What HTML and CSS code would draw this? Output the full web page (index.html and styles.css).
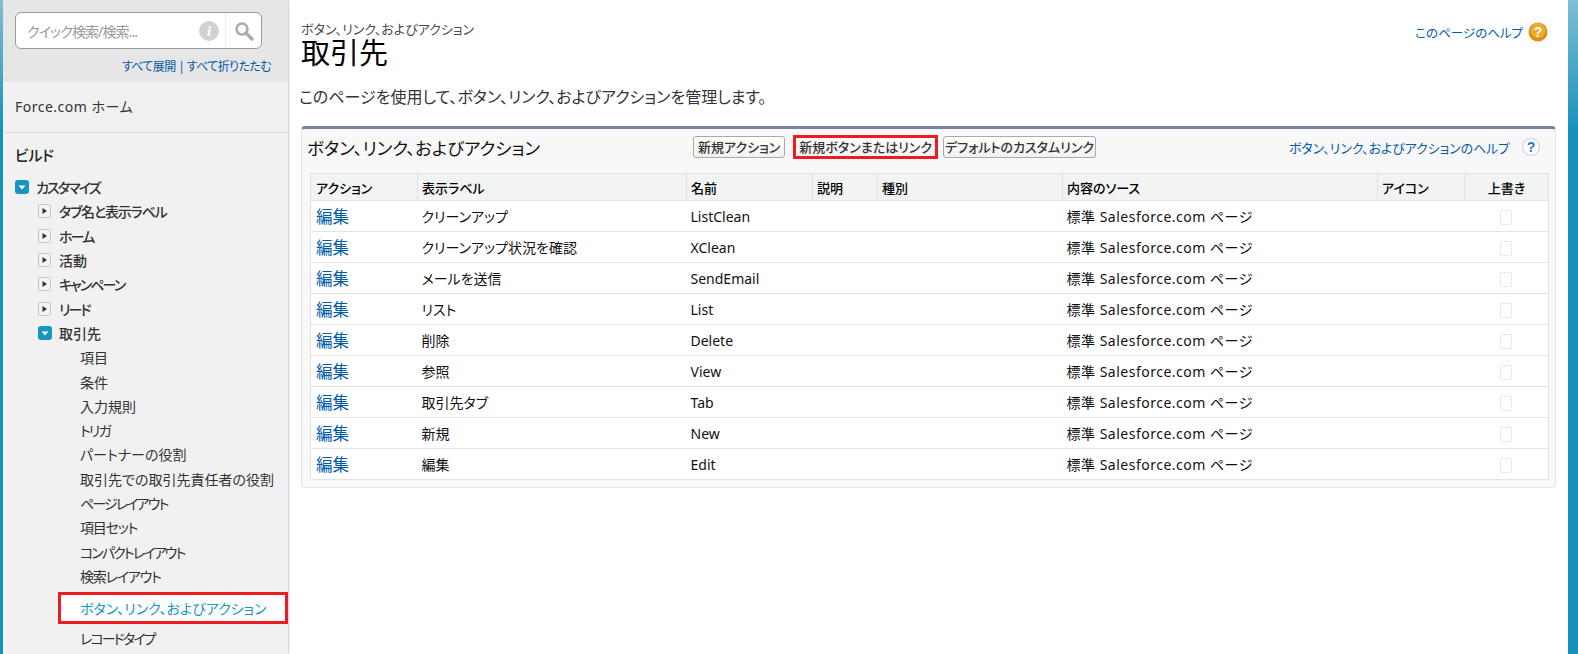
FILE: index.html
```html
<!DOCTYPE html>
<html lang="ja">
<head>
    <meta charset="UTF-8">
    <title>取引先 ボタン、リンク、およびアクション</title>
    <link rel="stylesheet" href="styles.css">
</head>
<body>
    <svg class="defs" width="0" height="0">
        <symbol id="open" viewBox="0 0 14 14">
            <rect width="14" height="14" rx="3" fill="#1797c0"/>
            <path d="M3.5 5.5h7L7 9.5z" fill="#fff"/>
        </symbol>
        <symbol id="closed" viewBox="0 0 14 14">
            <rect x=".5" y=".5" width="12" height="13" rx="2" fill="#f2f2f2" stroke="#c4c4c4"/>
            <path d="M4.5 4l4.5 3-4.5 3z" fill="#333"/>
        </symbol>
    </svg>

    <aside class="sidebar">
        <div class="search-zone">
            <div class="search-box">
                <span class="search-hint">クイック検索/検索...</span>
                <svg class="info-icon" width="20" height="20" viewBox="0 0 20 20">
                    <circle cx="10" cy="10" r="10" fill="#d0d3d5"/>
                    <text x="10" y="15" class="info-i">i</text>
                </svg>
                <span class="search-btn">
                    <svg width="20" height="20" viewBox="0 0 20 20">
                        <circle cx="8" cy="8" r="5.5" fill="none" stroke="#a9adaf" stroke-width="2.6"/>
                        <path d="M12 12l6 6" stroke="#a9adaf" stroke-width="3.4" stroke-linecap="round"/>
                    </svg>
                </span>
            </div>
            <div class="expand-links"><a href="#">すべて展開</a> | <a href="#">すべて折りたたむ</a></div>
        </div>
        <div class="home-link">Force.com ホーム</div>
        <div class="nav-title">ビルド</div>
        <ul class="nav">
            <li class="nav-top tight"><svg class="tw"><use href="#open"/></svg>カスタマイズ</li>
            <li class="nav-sec tight-some"><svg class="tw"><use href="#closed"/></svg>タブ名と表示ラベル</li>
            <li class="nav-sec tight"><svg class="tw"><use href="#closed"/></svg>ホーム</li>
            <li class="nav-sec"><svg class="tw"><use href="#closed"/></svg>活動</li>
            <li class="nav-sec tight"><svg class="tw"><use href="#closed"/></svg>キャンペーン</li>
            <li class="nav-sec tight"><svg class="tw"><use href="#closed"/></svg>リード</li>
            <li class="nav-sec"><svg class="tw"><use href="#open"/></svg>取引先</li>
            <li class="nav-sub">項目</li>
            <li class="nav-sub">条件</li>
            <li class="nav-sub">入力規則</li>
            <li class="nav-sub tight">トリガ</li>
            <li class="nav-sub">パートナーの役割</li>
            <li class="nav-sub">取引先での取引先責任者の役割</li>
            <li class="nav-sub tight">ページレイアウト</li>
            <li class="nav-sub tight-some">項目セット</li>
            <li class="nav-sub tight">コンパクトレイアウト</li>
            <li class="nav-sub tight-some">検索レイアウト</li>
            <li class="nav-active">ボタン、リンク、およびアクション</li>
            <li class="nav-sub tight">レコードタイプ</li>
        </ul>
    </aside>

    <main class="content">
        <div class="page-head">
            <div>
                <div class="page-sub">ボタン、リンク、およびアクション</div>
                <h1 class="page-title">取引先</h1>
            </div>
            <a class="page-help" href="#">このページのヘルプ
                <svg width="20" height="20" viewBox="0 0 20 20">
                    <circle cx="10" cy="10" r="9.5" fill="#e08d16"/>
                    <circle cx="10" cy="8.5" r="7.5" fill="#f0a92e"/>
                    <text x="10" y="15" class="help-q">?</text>
                </svg>
            </a>
        </div>
        <p class="page-desc">このページを使用して、ボタン、リンク、およびアクションを管理します。</p>

        <section class="panel">
            <div class="panel-head">
                <h2 class="panel-title">ボタン、リンク、およびアクション</h2>
                <div class="panel-btns">
                    <button class="btn">新規アクション</button>
                    <button class="btn btn-marked">新規ボタンまたはリンク</button>
                    <button class="btn btn-wide">デフォルトのカスタムリンク</button>
                </div>
                <a class="panel-help" href="#">ボタン、リンク、およびアクションのヘルプ
                    <svg width="20" height="20" viewBox="0 0 20 20">
                        <circle cx="10" cy="10" r="9.5" fill="#dfe3e8"/>
                        <circle cx="10" cy="10" r="7.5" fill="#fff"/>
                        <text x="10" y="15" class="help-q help-blue">?</text>
                    </svg>
                </a>
            </div>
            <table class="list">
                <colgroup>
                    <col class="c1"><col class="c2"><col class="c3"><col class="c4">
                    <col class="c5"><col class="c6"><col class="c7"><col class="c8">
                </colgroup>
                <thead>
                    <tr>
                        <th>アクション</th><th>表示ラベル</th><th>名前</th><th>説明</th>
                        <th>種別</th><th>内容のソース</th><th>アイコン</th><th class="center">上書き</th>
                    </tr>
                </thead>
                <tbody>
                    <tr><td><a href="#">編集</a></td><td>クリーンアップ</td><td>ListClean</td><td></td><td></td><td class="src">標準 Salesforce.com ページ</td><td></td><td class="center"><span class="check"></span></td></tr>
                    <tr><td><a href="#">編集</a></td><td>クリーンアップ状況を確認</td><td>XClean</td><td></td><td></td><td class="src">標準 Salesforce.com ページ</td><td></td><td class="center"><span class="check"></span></td></tr>
                    <tr><td><a href="#">編集</a></td><td>メールを送信</td><td>SendEmail</td><td></td><td></td><td class="src">標準 Salesforce.com ページ</td><td></td><td class="center"><span class="check"></span></td></tr>
                    <tr><td><a href="#">編集</a></td><td>リスト</td><td>List</td><td></td><td></td><td class="src">標準 Salesforce.com ページ</td><td></td><td class="center"><span class="check"></span></td></tr>
                    <tr><td><a href="#">編集</a></td><td>削除</td><td>Delete</td><td></td><td></td><td class="src">標準 Salesforce.com ページ</td><td></td><td class="center"><span class="check"></span></td></tr>
                    <tr><td><a href="#">編集</a></td><td>参照</td><td>View</td><td></td><td></td><td class="src">標準 Salesforce.com ページ</td><td></td><td class="center"><span class="check"></span></td></tr>
                    <tr><td><a href="#">編集</a></td><td>取引先タブ</td><td>Tab</td><td></td><td></td><td class="src">標準 Salesforce.com ページ</td><td></td><td class="center"><span class="check"></span></td></tr>
                    <tr><td><a href="#">編集</a></td><td>新規</td><td>New</td><td></td><td></td><td class="src">標準 Salesforce.com ページ</td><td></td><td class="center"><span class="check"></span></td></tr>
                    <tr><td><a href="#">編集</a></td><td>編集</td><td>Edit</td><td></td><td></td><td class="src">標準 Salesforce.com ページ</td><td></td><td class="center"><span class="check"></span></td></tr>
                </tbody>
            </table>
        </section>
    </main>
</body>
</html>
```

FILE: styles.css
```css
* {
    box-sizing: border-box;
}

html, body {
    height: 100%;
}

body {
    margin: 0;
    display: flex;
    overflow: hidden;
    background: #fff;
    color: #222;
    font-family: "Noto Sans", "Noto Sans CJK JP", sans-serif;
    font-feature-settings: "palt";
    font-size: 14px;
    border-left: 3px solid #1594bb;
    border-right: 10px solid #1594bb;
    border-image: linear-gradient(#82bdd3, #1594bb 130px) 1;
}

a {
    color: #015ba7;
    text-decoration: none;
}

.defs {
    position: absolute;
}

/* sidebar */
.sidebar {
    width: 285px;
    flex-shrink: 0;
    background: #f1f1f1;
    box-shadow: 1px 0 2px #ccc;
}

.search-zone {
    height: 82px;
    padding: 12px 0 0 12px;
    background: #e6e6e6;
}

.search-box {
    display: flex;
    align-items: center;
    width: 247px;
    height: 37px;
    padding-left: 11px;
    background: #fff;
    border: 1px solid #9a9a9a;
    border-radius: 6px;
}

.search-hint {
    flex: 1;
    color: #999;
    font-size: 14px;
    letter-spacing: -.9px;
    white-space: nowrap;
}

.info-icon {
    margin-right: 6px;
}

.info-i {
    fill: #fff;
    font: italic bold 15px "Liberation Serif", serif;
    text-anchor: middle;
}

.search-btn {
    display: flex;
    align-items: center;
    justify-content: center;
    width: 36px;
    height: 100%;
    border-left: 1px dotted #ddd;
}

.expand-links {
    width: 256px;
    margin-top: 10px;
    color: #015ba7;
    font-size: 12px;
    letter-spacing: -.6px;
    line-height: 16px;
    text-align: right;
}

.home-link {
    height: 51px;
    padding: 14px 0 0 12px;
    border-bottom: 1px solid #dcdcdc;
    color: #333;
    font-size: 14px;
    letter-spacing: .5px;
    line-height: 22px;
}

.nav-title {
    height: 42px;
    padding: 11px 0 0 12px;
    color: #222;
    font-size: 15px;
    font-weight: 500;
    letter-spacing: -.4px;
    line-height: 22px;
}

.nav {
    margin: 0;
    padding: 0;
    list-style: none;
}

.nav li {
    display: flex;
    align-items: center;
    height: 24.3px;
    white-space: nowrap;
}

.tw {
    width: 14px;
    height: 14px;
    margin-right: 7px;
    flex-shrink: 0;
}

.nav-top {
    padding-left: 12px;
    font-weight: 500;
    color: #333;
}

.nav-sec {
    padding-left: 35px;
    font-weight: 500;
    color: #333;
}

.nav-sub {
    padding-left: 77px;
    color: #333;
}

.tight {
    letter-spacing: -1.9px;
}

.tight-some {
    letter-spacing: -1.2px;
}

.nav .nav-active {
    height: 32px;
    margin: 4px 0 2px 55px;
    padding-left: 19px;
    background: #fff;
    border: 3px solid #ed1c24;
    color: #1797c0;
}

/* main area */
.content {
    flex: 1;
    min-width: 0;
    padding: 22px 12px 0 13px;
}

.page-head {
    display: flex;
    justify-content: space-between;
    height: 46px;
}

.page-sub {
    color: #4a4a4a;
    font-size: 13px;
    line-height: 15px;
}

.page-title {
    margin: 0;
    color: #000;
    font-size: 29px;
    font-weight: 400;
    line-height: 31px;
}

.page-help {
    display: flex;
    align-items: center;
    gap: 5px;
    height: 20px;
    margin-right: 8px;
    font-size: 12.5px;
}

.help-q {
    fill: #fff;
    font: bold 14px "Liberation Sans", sans-serif;
    text-anchor: middle;
}

.help-blue {
    fill: #2a72c8;
}

.page-desc {
    height: 58px;
    margin: 0 0 0 -2px;
    padding-top: 18px;
    color: #333;
    font-size: 16px;
    line-height: 22px;
}

.panel {
    height: 362px;
    padding: 0 7px 0 8px;
    background: #f8f8f8;
    border: 1px solid #e3e5e7;
    border-top: 3px solid #7a83a0;
    border-radius: 4px;
}

.panel-head {
    display: flex;
    align-items: center;
    height: 44px;
    padding-bottom: 8px;
}

.panel-title {
    width: 386px;
    margin: 0 0 0 -3px;
    color: #111;
    font-size: 17.5px;
    font-weight: 400;
    white-space: nowrap;
}

.panel-btns {
    display: flex;
    align-items: center;
    gap: 5px;
}

.btn {
    height: 22px;
    padding: 0 4px;
    background: linear-gradient(#fff, #f1f1f1);
    border: 1px solid #aaa;
    border-radius: 3px;
    color: #333;
    font-family: inherit;
    font-feature-settings: inherit;
    font-size: 13px;
    font-weight: 500;
    line-height: 18px;
    white-space: nowrap;
}

.btn-marked {
    height: 24px;
    margin-left: 3px;
    padding: 0 3px;
    border: 3px solid #ed1c24;
    border-radius: 0;
}

.btn-wide {
    padding: 0 1px;
}

.panel-help {
    display: flex;
    align-items: center;
    gap: 11px;
    margin: 0 7px 0 auto;
    font-size: 12.9px;
}

.list {
    width: 1238px;
    border-collapse: collapse;
    table-layout: fixed;
    background: #fff;
    border: 1px solid #e0e3e5;
}

.c1 { width: 107px; }
.c2 { width: 269px; }
.c3 { width: 126px; }
.c4 { width: 65px; }
.c5 { width: 185px; }
.c6 { width: 315px; }
.c7 { width: 87px; }
.c8 { width: 84px; }

.list th {
    height: 27px;
    padding: 0 4px;
    background: #f2f3f3;
    border: 1px solid #e0e3e5;
    color: #000;
    font-size: 13px;
    font-weight: 500;
    text-align: left;
}

.list td {
    height: 31px;
    padding: 0 4px;
    border-bottom: 1px solid #e3e3e3;
    color: #111;
    font-size: 14px;
    white-space: nowrap;
}

.list th:first-child,
.list td:first-child {
    padding-left: 5px;
}

.list td a {
    font-size: 16.5px;
}

.list .src {
    letter-spacing: .5px;
}

.list .center {
    text-align: center;
}

.check {
    display: inline-block;
    width: 12px;
    height: 15px;
    vertical-align: middle;
    border: 1px dotted #d5d5d5;
    border-radius: 2px;
}
```
